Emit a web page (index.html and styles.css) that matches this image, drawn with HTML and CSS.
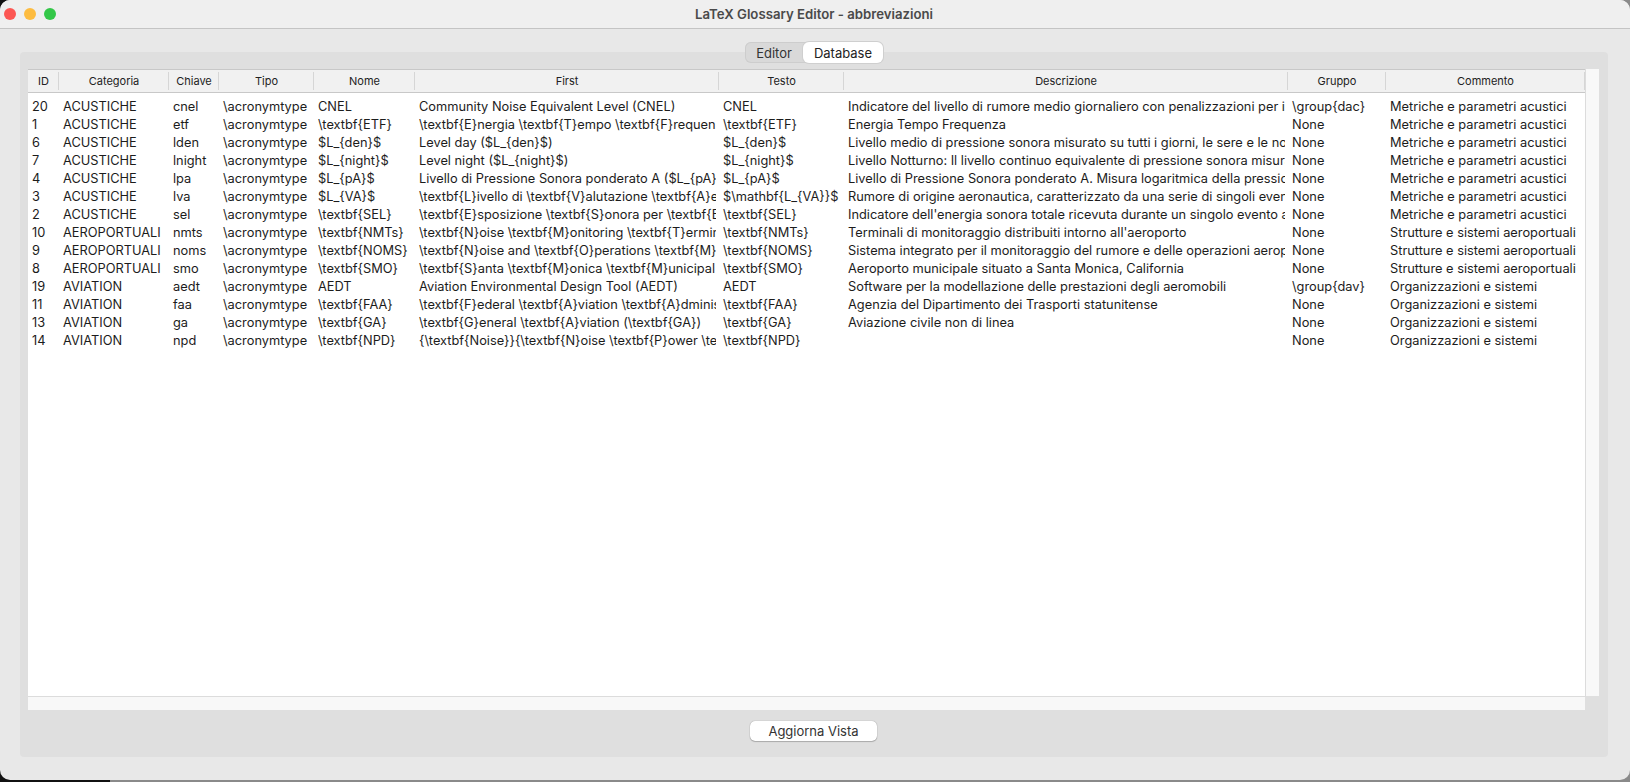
FILE: index.html
```html
<!DOCTYPE html>
<html lang="it">
<head>
    <meta charset="UTF-8">
    <title>LaTeX Glossary Editor - abbreviazioni</title>
    <link rel="stylesheet" href="styles.css">
</head>
<body>
<div class="window">
    <div class="titlebar">
        <div class="lights">
            <span class="light red"></span>
            <span class="light yellow"></span>
            <span class="light green"></span>
        </div>
        <div class="title">LaTeX Glossary Editor - abbreviazioni</div>
    </div>
    <div class="content">
        <div class="tabs">
            <span class="tab">Editor</span>
            <span class="tab active">Database</span>
        </div>
        <div class="panel">
            <div class="view">
                <div class="table-area">
                    <table>
                        <colgroup>
                            <col class="c-id"><col class="c-cat"><col class="c-key"><col class="c-type"><col class="c-name">
                            <col class="c-first"><col class="c-text"><col class="c-desc"><col class="c-group"><col class="c-note">
                        </colgroup>
                        <thead>
                            <tr>
                                <th>ID</th><th>Categoria</th><th>Chiave</th><th>Tipo</th><th>Nome</th>
                                <th>First</th><th>Testo</th><th>Descrizione</th><th>Gruppo</th><th>Commento</th>
                            </tr>
                        </thead>
                        <tbody>
                            <tr><td>20</td><td>ACUSTICHE</td><td>cnel</td><td>\acronymtype</td><td>CNEL</td><td>Community Noise Equivalent Level (CNEL)</td><td>CNEL</td><td>Indicatore del livello di rumore medio giornaliero con penalizzazioni per i</td><td>\group{dac}</td><td>Metriche e parametri acustici</td></tr>
                            <tr><td>1</td><td>ACUSTICHE</td><td>etf</td><td>\acronymtype</td><td>\textbf{ETF}</td><td>\textbf{E}nergia \textbf{T}empo \textbf{F}requenza</td><td>\textbf{ETF}</td><td>Energia Tempo Frequenza</td><td>None</td><td>Metriche e parametri acustici</td></tr>
                            <tr><td>6</td><td>ACUSTICHE</td><td>lden</td><td>\acronymtype</td><td>$L_{den}$</td><td>Level day ($L_{den}$)</td><td>$L_{den}$</td><td>Livello medio di pressione sonora misurato su tutti i giorni, le sere e le notti</td><td>None</td><td>Metriche e parametri acustici</td></tr>
                            <tr><td>7</td><td>ACUSTICHE</td><td>lnight</td><td>\acronymtype</td><td>$L_{night}$</td><td>Level night ($L_{night}$)</td><td>$L_{night}$</td><td>Livello Notturno: Il livello continuo equivalente di pressione sonora misurato</td><td>None</td><td>Metriche e parametri acustici</td></tr>
                            <tr><td>4</td><td>ACUSTICHE</td><td>lpa</td><td>\acronymtype</td><td>$L_{pA}$</td><td>Livello di Pressione Sonora ponderato A ($L_{pA}$)</td><td>$L_{pA}$</td><td>Livello di Pressione Sonora ponderato A. Misura logaritmica della pressione</td><td>None</td><td>Metriche e parametri acustici</td></tr>
                            <tr><td>3</td><td>ACUSTICHE</td><td>lva</td><td>\acronymtype</td><td>$L_{VA}$</td><td>\textbf{L}ivello di \textbf{V}alutazione \textbf{A}eroportuale</td><td>$\mathbf{L_{VA}}$</td><td>Rumore di origine aeronautica, caratterizzato da una serie di singoli eventi</td><td>None</td><td>Metriche e parametri acustici</td></tr>
                            <tr><td>2</td><td>ACUSTICHE</td><td>sel</td><td>\acronymtype</td><td>\textbf{SEL}</td><td>\textbf{E}sposizione \textbf{S}onora per \textbf{E}vento</td><td>\textbf{SEL}</td><td>Indicatore dell'energia sonora totale ricevuta durante un singolo evento acustico</td><td>None</td><td>Metriche e parametri acustici</td></tr>
                            <tr><td>10</td><td>AEROPORTUALI</td><td>nmts</td><td>\acronymtype</td><td>\textbf{NMTs}</td><td>\textbf{N}oise \textbf{M}onitoring \textbf{T}erminals</td><td>\textbf{NMTs}</td><td>Terminali di monitoraggio distribuiti intorno all'aeroporto</td><td>None</td><td>Strutture e sistemi aeroportuali</td></tr>
                            <tr><td>9</td><td>AEROPORTUALI</td><td>noms</td><td>\acronymtype</td><td>\textbf{NOMS}</td><td>\textbf{N}oise and \textbf{O}perations \textbf{M}onitoring</td><td>\textbf{NOMS}</td><td>Sistema integrato per il monitoraggio del rumore e delle operazioni aeroportuali</td><td>None</td><td>Strutture e sistemi aeroportuali</td></tr>
                            <tr><td>8</td><td>AEROPORTUALI</td><td>smo</td><td>\acronymtype</td><td>\textbf{SMO}</td><td>\textbf{S}anta \textbf{M}onica \textbf{M}unicipal \textbf{O}</td><td>\textbf{SMO}</td><td>Aeroporto municipale situato a Santa Monica, California</td><td>None</td><td>Strutture e sistemi aeroportuali</td></tr>
                            <tr><td>19</td><td>AVIATION</td><td>aedt</td><td>\acronymtype</td><td>AEDT</td><td>Aviation Environmental Design Tool (AEDT)</td><td>AEDT</td><td>Software per la modellazione delle prestazioni degli aeromobili</td><td>\group{dav}</td><td>Organizzazioni e sistemi</td></tr>
                            <tr><td>11</td><td>AVIATION</td><td>faa</td><td>\acronymtype</td><td>\textbf{FAA}</td><td>\textbf{F}ederal \textbf{A}viation \textbf{A}dministration</td><td>\textbf{FAA}</td><td>Agenzia del Dipartimento dei Trasporti statunitense</td><td>None</td><td>Organizzazioni e sistemi</td></tr>
                            <tr><td>13</td><td>AVIATION</td><td>ga</td><td>\acronymtype</td><td>\textbf{GA}</td><td>\textbf{G}eneral \textbf{A}viation (\textbf{GA})</td><td>\textbf{GA}</td><td>Aviazione civile non di linea</td><td>None</td><td>Organizzazioni e sistemi</td></tr>
                            <tr><td>14</td><td>AVIATION</td><td>npd</td><td>\acronymtype</td><td>\textbf{NPD}</td><td>{\textbf{Noise}}{\textbf{N}oise \textbf{P}ower \textbf{D}istance}</td><td>\textbf{NPD}</td><td></td><td>None</td><td>Organizzazioni e sistemi</td></tr>
                        </tbody>
                    </table>
                </div>
                <div class="scroll-v"></div>
                <div class="scroll-h"></div>
            </div>
            <div class="actions">
                <button class="btn">Aggiorna Vista</button>
            </div>
        </div>
    </div>
</div>
</body>
</html>
```

FILE: styles.css
```css
html, body {
    margin: 0;
    height: 100%;
}

body {
    background: linear-gradient(to right, #111 110px, #8a8a8a 110px);
    font-family: Inter, "Liberation Sans", Arial, sans-serif;
    color: #222;
    overflow: hidden;
}

.window {
    height: 780px;
    background-color: #e8e8e8;
    border-radius: 10px;
    overflow: hidden;
}

.titlebar {
    height: 28px;
    display: flex;
    align-items: center;
    justify-content: center;
    background-color: #efefef;
    border-bottom: 1px solid #c4c4c4;
    position: relative;
}

.lights {
    position: absolute;
    left: 4px;
    top: 8px;
    display: flex;
    gap: 8px;
}

.light {
    width: 12px;
    height: 12px;
    border-radius: 50%;
}

.red { background-color: #fc5753; }
.yellow { background-color: #fdbc40; }
.green { background-color: #33c748; }

.title {
    font-size: 13.2px;
    font-weight: 600;
    color: #4a4a4a;
    margin-right: 2px;
}

.content {
    padding: 13px 22px 23px 20px;
    display: flex;
    flex-direction: column;
    align-items: center;
}

.tabs {
    display: flex;
    height: 21px;
    margin-bottom: -11px;
    background-color: #d9d9d9;
    border-radius: 6px;
    box-shadow: inset 0 0 0 1px #cdcdcd;
    position: relative;
    font-size: 13px;
}

.tab {
    width: 58px;
    display: flex;
    align-items: center;
    justify-content: center;
    color: #333;
}

.tab.active {
    width: 80px;
    background-color: #fff;
    color: #222;
    border-radius: 6px;
    box-shadow: 0 0 0 1px #cfcfcf;
}

.panel {
    width: 100%;
    height: 705px;
    box-sizing: border-box;
    padding: 17px 8px 0;
    background-color: #dfdfdf;
    border-radius: 4px;
}

.view {
    display: grid;
    grid-template-columns: 1558px 13px;
    grid-template-rows: 628px 13px;
}

.table-area {
    background-color: #fff;
    border-right: 1px solid #dcdcdc;
    border-bottom: 1px solid #dcdcdc;
    box-sizing: border-box;
    overflow: hidden;
}

.scroll-v {
    background-color: #f8f8f8;
    margin-bottom: 1px;
}

.scroll-h {
    background-color: #f8f8f8;
    grid-column: 1;
    margin-right: 1px;
}

table {
    border-collapse: separate;
    border-spacing: 0;
    table-layout: fixed;
    width: 1557px;
    font-size: 12.8px;
}

.c-id { width: 31px; }
.c-cat { width: 110px; }
.c-key { width: 50px; }
.c-type { width: 95px; }
.c-name { width: 101px; }
.c-first { width: 304px; }
.c-text { width: 125px; }
.c-desc { width: 444px; }
.c-group { width: 98px; }
.c-note { width: 199px; }

th {
    height: 22px;
    padding: 0;
    font-size: 11px;
    font-weight: normal;
    text-align: center;
    color: #222;
    background: #f1f1f1 linear-gradient(#d6d6d6, #d6d6d6) right center / 1px 18px no-repeat;
    border-top: 1px solid #c8c8c8;
    border-bottom: 1px solid #c8c8c8;
}

td {
    height: 18px;
    padding: 0 0 0 4px;
    white-space: nowrap;
    overflow: hidden;
    border-right: 3px solid #fff;
    color: #1c1c1c;
}

tbody tr:first-child td {
    padding-top: 4px;
}

.actions {
    display: flex;
    justify-content: center;
    padding-top: 11px;
}

.btn {
    width: 127px;
    height: 20px;
    margin-right: 1px;
    padding: 0;
    border: 0;
    border-radius: 5px;
    background-color: #fff;
    box-shadow: 0 0 1px rgba(0, 0, 0, .45), 0 1px 1px rgba(0, 0, 0, .2);
    font-family: inherit;
    font-size: 13px;
    color: #333;
}
```
